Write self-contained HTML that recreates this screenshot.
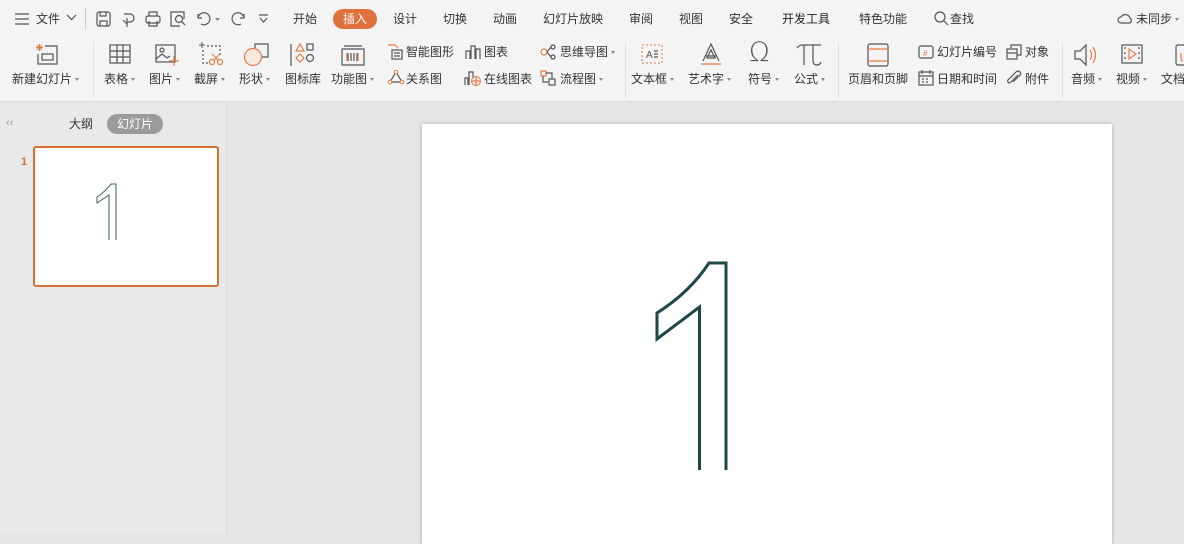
<!DOCTYPE html>
<html><head><meta charset="utf-8"><style>
*{margin:0;padding:0;box-sizing:border-box}
body{width:1184px;height:533px;overflow:hidden;background:#e6e6e6;font-family:"Liberation Sans","Noto Sans CJK SC",sans-serif;font-size:12px;color:#333;position:relative}
.t{position:absolute;white-space:nowrap;line-height:14px}
.top{position:absolute;left:0;top:0;width:1184px;height:102px;background:#f4f4f4;border-bottom:1px solid #dcdcdc}
.dd::after{content:"";display:inline-block;margin-left:3px;vertical-align:middle;border-left:2.5px solid transparent;border-right:2.5px solid transparent;border-top:3px solid #888}
svg{position:absolute;overflow:visible}
.ic{fill:none;stroke:#555;stroke-width:1.2}
.or{fill:none;stroke:#e07b45;stroke-width:1.2}
.sep{position:absolute;top:42px;width:1px;height:56px;background:#e0e0e0}
</style></head><body>
<div class="top">
<!-- tab row -->
<svg style="left:15px;top:13px" width="14" height="12"><path class="ic" d="M0 1H14M0 6H14M0 11H14"/></svg>
<span class="t" style="left:36px;top:12px">文件</span>
<svg style="left:67px;top:15px" width="9" height="6"><path class="ic" d="M0 0L4.5 4.5L9 0" stroke="#999"/></svg>
<div style="position:absolute;left:85px;top:8px;width:1px;height:22px;background:#ccc"></div>
<svg style="left:96px;top:11px" width="16" height="16"><rect class="ic" x="1" y="1" width="13" height="14" rx="2"/><path class="ic" d="M4 1V5H10V1M4 15V10H11V15"/></svg>
<svg style="left:121px;top:11px" width="16" height="16"><path class="ic" d="M3 3H9A4 4 0 0 1 9 11H6M6 7V16M2 9L6 13"/></svg>
<svg style="left:145px;top:11px" width="16" height="16"><rect class="ic" x="1" y="5" width="14" height="7" rx="2"/><path class="ic" d="M4 5V1H12V5M4 10V15H12V10"/></svg>
<svg style="left:170px;top:11px" width="16" height="16"><path class="ic" d="M10 15H1V1H14V8"/><circle class="ic" cx="9" cy="8" r="3.5"/><path class="ic" d="M11.5 10.5L15 14"/></svg>
<svg style="left:197px;top:12px" width="14" height="14"><path class="ic" d="M1 2V6H5M1 6A6 6 0 1 1 4 12"/></svg>
<svg style="left:215px;top:18px" width="5" height="3"><path d="M0 0H5L2.5 3Z" fill="#888"/></svg>
<svg style="left:231px;top:12px" width="14" height="14"><path class="ic" stroke="#bbb" d="M13 2V6H9M13 6A6 6 0 1 0 10 12"/></svg>
<svg style="left:259px;top:15px" width="9" height="8"><path class="ic" d="M0 0H9M1 3L4.5 7L8 3"/></svg>
<span class="t" style="left:293px;top:12px">开始</span>
<div style="position:absolute;left:333px;top:9px;width:44px;height:20px;border-radius:10px;background:#e0713c"></div>
<span class="t" style="left:343px;top:12px;color:#fff">插入</span>
<span class="t" style="left:393px;top:12px">设计</span>
<span class="t" style="left:443px;top:12px">切换</span>
<span class="t" style="left:493px;top:12px">动画</span>
<span class="t" style="left:543px;top:12px">幻灯片放映</span>
<span class="t" style="left:629px;top:12px">审阅</span>
<span class="t" style="left:679px;top:12px">视图</span>
<span class="t" style="left:729px;top:12px">安全</span>
<span class="t" style="left:782px;top:12px;color:#222">开发工具</span>
<span class="t" style="left:859px;top:12px">特色功能</span>
<svg style="left:934px;top:11px" width="14" height="14"><circle class="ic" cx="6" cy="6" r="5" stroke-width="1.5"/><path class="ic" d="M9.5 9.5L14 14" stroke-width="1.5"/></svg>
<span class="t" style="left:950px;top:12px">查找</span>
<svg style="left:1117px;top:12px" width="16" height="14"><path class="ic" d="M4 11A3 3 0 0 1 4 5A5 5 0 0 1 13 6A3 3 0 0 1 13 11Z"/></svg>
<span class="t dd" style="left:1136px;top:12px">未同步</span>

<!-- ribbon -->
<svg style="left:35px;top:44px" width="24" height="22"><path d="M2 1L7 6M7 1L2 6M4.5 0V7M1 3.5H8" stroke="#e07b45" stroke-width="1"/><path class="ic" d="M10 2H22V20H3V10"/><rect class="ic" x="7" y="10" width="11" height="6"/></svg>
<span class="t dd" style="left:12px;top:72px">新建幻灯片</span>
<div class="sep" style="left:93px"></div>
<svg style="left:109px;top:44px" width="22" height="20"><rect class="ic" x="1" y="1" width="20" height="18"/><path class="ic" d="M1 7H21M1 13H21M8 1V19M14 1V19"/></svg>
<span class="t dd" style="left:104px;top:72px">表格</span>
<svg style="left:155px;top:44px" width="24" height="22"><rect class="ic" x="1" y="1" width="19" height="17"/><circle class="ic" cx="7" cy="6" r="2"/><path class="ic" d="M1 15L7 10L12 14L15 12"/><path class="or" d="M19 12V22M14 17H24"/></svg>
<span class="t dd" style="left:149px;top:72px">图片</span>
<svg style="left:199px;top:42px" width="24" height="24"><path d="M3 0V6M0 3H6" stroke="#555"/><path class="ic" stroke-dasharray="2 2" d="M8 4H21V14M4 8V21H10"/><circle class="or" cx="13" cy="20" r="2.5"/><circle class="or" cx="21" cy="20" r="2.5"/><path class="or" d="M15 18L21 12M19 18L13 12"/></svg>
<span class="t dd" style="left:194px;top:72px">截屏</span>
<svg style="left:243px;top:43px" width="26" height="24"><circle cx="10" cy="14" r="8.5" fill="#fbe9df" stroke="#e07b45" stroke-width="1.2"/><path class="ic" d="M12 5V1H25V14H19"/></svg>
<span class="t dd" style="left:239px;top:72px">形状</span>
<svg style="left:290px;top:43px" width="24" height="24"><path class="ic" d="M1 1V23"/><path class="or" d="M10 1L14 8H6Z"/><rect class="ic" x="17" y="1" width="6" height="6"/><path class="or" d="M10 11L14 15L10 19L6 15Z"/><circle class="ic" cx="20" cy="15" r="3.5"/></svg>
<span class="t" style="left:285px;top:72px">图标库</span>
<svg style="left:340px;top:43px" width="26" height="24"><path class="ic" d="M4 3H22M2 6H24V22H2ZM8 10V18M11 10V18M14 10V18M17 10V18"/><path class="or" d="M7 10V18M18 10V18"/></svg>
<span class="t dd" style="left:331px;top:72px">功能图</span>
<svg style="left:387px;top:44px" width="16" height="16"><path class="or" d="M1 1H8L11 4"/><rect class="ic" x="5" y="6" width="10" height="9"/><path class="ic" d="M7 9H13M7 12H13"/></svg>
<span class="t" style="left:406px;top:45px">智能图形</span>
<svg style="left:388px;top:70px" width="16" height="16"><path class="ic" d="M8 2L14 12H2Z"/><circle cx="8" cy="2" r="1.8" fill="#fff" stroke="#e07b45"/><circle cx="2" cy="12" r="1.8" fill="#fff" stroke="#e07b45"/><circle cx="14" cy="12" r="1.8" fill="#fff" stroke="#e07b45"/></svg>
<span class="t" style="left:406px;top:72px">关系图</span>
<svg style="left:465px;top:44px" width="16" height="16"><path class="ic" d="M1 15V7H5V15M6 15V2H10V15M11 15V5H15V15"/></svg>
<span class="t" style="left:484px;top:45px">图表</span>
<svg style="left:464px;top:70px" width="18" height="16"><path class="ic" d="M1 15V8H4V15M5 15V2H9V8"/><circle cx="12" cy="11" r="4.5" fill="#fbe9df" stroke="#e07b45"/><path class="or" d="M7.5 11H16.5M12 6.5V15.5"/></svg>
<span class="t" style="left:484px;top:72px">在线图表</span>
<svg style="left:540px;top:44px" width="16" height="16"><circle class="or" cx="4" cy="8" r="3"/><path class="ic" d="M7 8L11 3M7 8L11 13"/><circle class="ic" cx="13" cy="3" r="2"/><circle class="ic" cx="13" cy="13" r="2"/></svg>
<span class="t dd" style="left:560px;top:45px">思维导图</span>
<svg style="left:540px;top:70px" width="16" height="16"><rect class="or" x="1" y="1" width="5" height="5"/><path class="ic" d="M6 3H12V9M3 6V12H8"/><rect class="ic" x="9" y="9" width="6" height="6"/></svg>
<span class="t dd" style="left:560px;top:72px">流程图</span>
<div class="sep" style="left:625px"></div>
<svg style="left:641px;top:44px" width="22" height="20"><rect x="1" y="1" width="20" height="18" fill="none" stroke="#e07b45" stroke-dasharray="2 2"/><text x="5" y="14" font-size="10" fill="#555" font-family="Liberation Sans">A</text><path class="ic" d="M13 7H17M13 10H17M13 13H17"/></svg>
<span class="t dd" style="left:631px;top:72px">文本框</span>
<svg style="left:699px;top:43px" width="24" height="24"><path class="ic" d="M4 18L12 1L20 18M6 13H18" stroke-width="1.3"/><path class="ic" d="M8 15L12 7L16 15Z"/><path class="or" d="M2 21H22"/></svg>
<span class="t dd" style="left:688px;top:72px">艺术字</span>
<span class="t" style="left:749px;top:38px;font-size:27px;line-height:30px;color:#555;font-family:'DejaVu Sans',sans-serif;font-weight:200">Ω</span>
<span class="t dd" style="left:748px;top:72px">符号</span>
<svg style="left:796px;top:44px" width="26" height="22"><path class="ic" d="M1 4Q3 1 7 1H25M8 1V21M17 1V17Q17 21 21 21Q24 21 25 18"/></svg>
<span class="t dd" style="left:794px;top:72px">公式</span>
<div class="sep" style="left:838px"></div>
<svg style="left:867px;top:43px" width="22" height="24"><rect class="ic" x="1" y="1" width="20" height="22" rx="2"/><path class="or" d="M1 6H21M1 18H21"/></svg>
<span class="t" style="left:848px;top:72px">页眉和页脚</span>
<svg style="left:918px;top:44px" width="16" height="16"><rect class="ic" x="1" y="2" width="14" height="12" rx="2"/><text x="5" y="12" font-size="8" fill="#e07b45">#</text></svg>
<span class="t" style="left:937px;top:45px">幻灯片编号</span>
<svg style="left:918px;top:70px" width="16" height="16"><rect class="ic" x="1" y="2" width="14" height="13"/><path class="ic" d="M1 6H15M4 0V4M12 0V4M4 9H6M8 9H10M4 12H6M8 12H10"/></svg>
<span class="t" style="left:937px;top:72px">日期和时间</span>
<svg style="left:1006px;top:44px" width="16" height="16"><path class="ic" d="M5 4V1H15V11H11M1 5H11V15H1ZM1 9H11"/></svg>
<span class="t" style="left:1025px;top:45px">对象</span>
<svg style="left:1006px;top:70px" width="16" height="16"><path class="ic" d="M12 5L5 12Q3 14 2 12Q1 10 3 9L10 2Q12 0 14 2Q16 4 13 6L7 12"/></svg>
<span class="t" style="left:1025px;top:72px">附件</span>
<div class="sep" style="left:1062px"></div>
<svg style="left:1074px;top:44px" width="26" height="22"><path class="ic" d="M1 7H6L12 1V21L6 15H1Z"/><path class="or" d="M16 6Q19 11 16 16M19 3Q24 11 19 19"/></svg>
<span class="t dd" style="left:1071px;top:72px">音频</span>
<svg style="left:1121px;top:44px" width="22" height="20"><rect class="ic" x="1" y="1" width="20" height="18"/><path class="ic" d="M4 3V5M4 8V10M4 13V15M18 3V5M18 8V10M18 13V15"/><path class="or" d="M8 5L15 10L8 15Z"/></svg>
<span class="t dd" style="left:1116px;top:72px">视频</span>
<svg style="left:1175px;top:44px" width="14" height="22"><rect class="ic" x="1" y="1" width="18" height="20" rx="2"/><path class="or" d="M6 9V15Q6 17 8 17"/></svg>
<span class="t" style="left:1161px;top:72px">文档</span>
</div>

<!-- left panel -->
<div style="position:absolute;left:0;top:103px;width:227px;height:430px;background:#e9e9e9;border-right:1px solid #d8d8d8"></div>
<span class="t" style="left:6px;top:116px;color:#999;font-size:11px">‹‹</span>
<span class="t" style="left:69px;top:117px;color:#333">大纲</span>
<div style="position:absolute;left:107px;top:114px;width:56px;height:20px;border-radius:10px;background:#9b9b9b"></div>
<span class="t" style="left:117px;top:117px;color:#fff">幻灯片</span>
<span class="t" style="left:21px;top:155px;color:#d8712f;font-weight:bold;font-size:11px">1</span>
<div style="position:absolute;left:33px;top:146px;width:186px;height:141px;border:2px solid #d8712f;border-radius:3px;background:#fff"></div>
<svg style="left:0;top:0" width="227" height="300"><path d="M109,240 V195 L97,203 V197 Q106,191 111,184 H116 V240" fill="none" stroke="#3a5c5c" stroke-width="1"/></svg>

<!-- slide -->
<div style="position:absolute;left:422px;top:124px;width:690px;height:420px;background:#fff;box-shadow:0 0 4px rgba(0,0,0,.25)"></div>
<svg style="left:0;top:0" width="1184" height="533"><path d="M699.5,470 V307 L657,339 V313 Q690,292 709,263 H726 V470" fill="none" stroke="#1e4747" stroke-width="3"/></svg>
</body></html>
